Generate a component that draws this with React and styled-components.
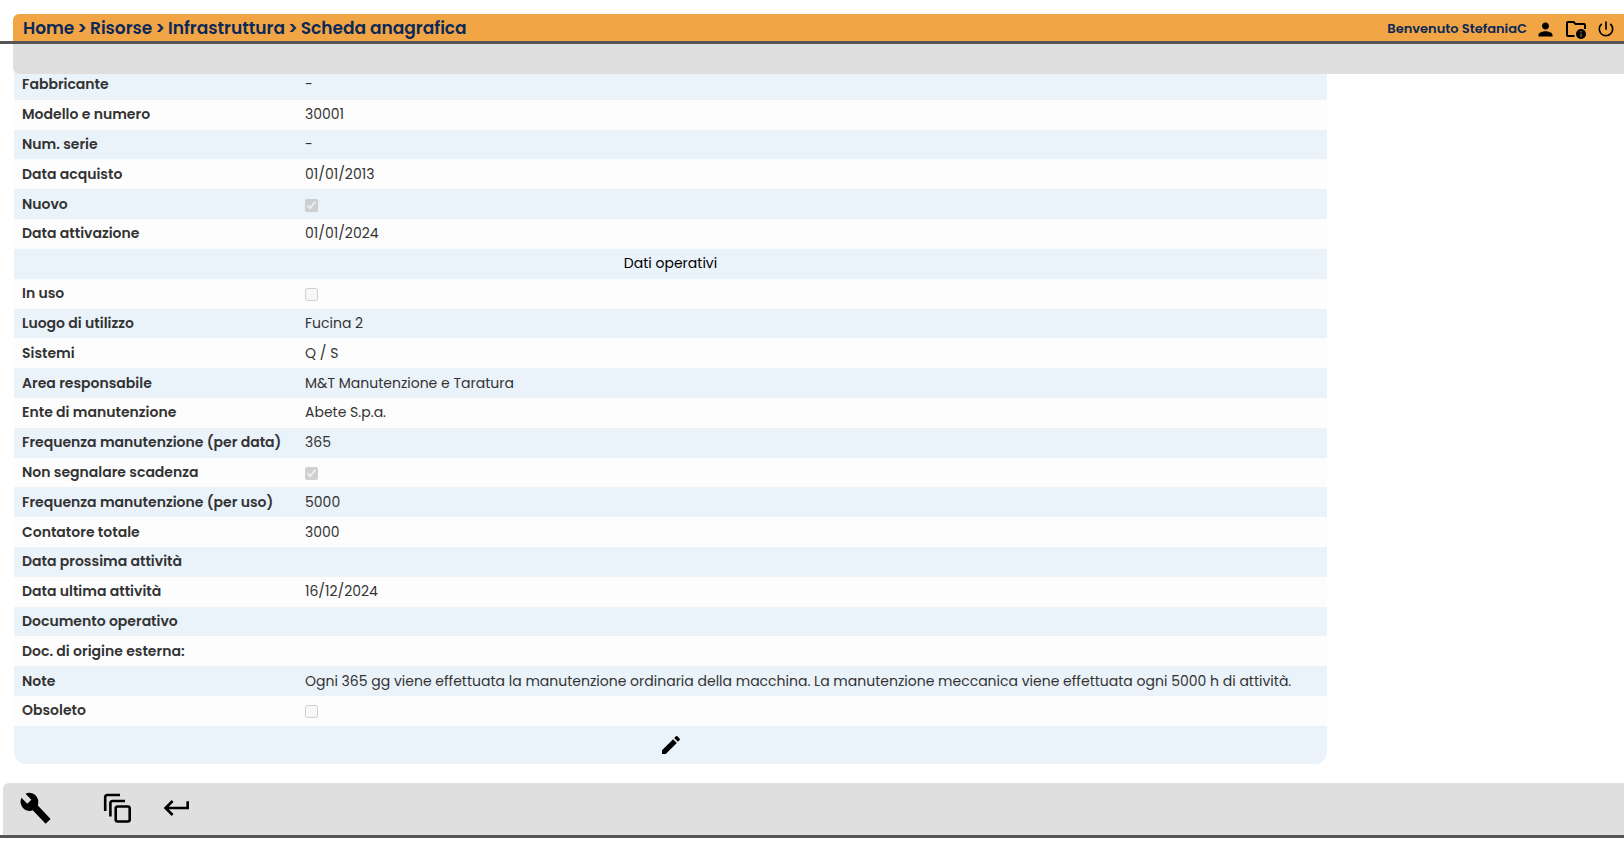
import React from "react";
import styled, { createGlobalStyle } from "styled-components";
import {
  MdEdit,
  MdKeyboardReturn,
  MdPerson,
  MdPowerSettingsNew,
} from "react-icons/md";

const GlobalStyle = createGlobalStyle`
  * {
    box-sizing: border-box;
  }
  body {
    margin: 0;
    background-color: #ffffff;
    color: #333333;
    font-family: Poppins, Inter, "Noto Sans", sans-serif;
    font-size: 14px;
  }
`;

const Page = styled.div`
  min-height: 100vh;
  padding: 14px 0 7px;
  display: flex;
  flex-direction: column;
`;

const Header = styled.header`
  position: sticky;
  top: 0;
  z-index: 1;
`;

const TitleBar = styled.div`
  height: 27px;
  margin-left: 13px;
  padding: 0 8px 0 10px;
  display: flex;
  align-items: center;
  justify-content: space-between;
  background-color: #f2a545;
  border-top-left-radius: 6px;
  color: #0a2858;
`;

const Breadcrumb = styled.nav`
  display: flex;
  gap: 3px;
  font-size: 17px;
  font-weight: 600;
  white-space: nowrap;
`;

const Crumb = styled.a`
  color: inherit;
  text-decoration: none;
`;

const UserArea = styled.div`
  display: flex;
  align-items: center;
  gap: 8px;
  padding-top: 3px;
`;

const Welcome = styled.span`
  font-size: 13px;
  font-weight: 600;
  white-space: nowrap;
`;

const IconButton = styled.button`
  display: flex;
  padding: 0;
  border: none;
  background: none;
  color: #000000;
  cursor: pointer;
`;

const Rule = styled.div`
  height: 3px;
  background-color: #555555;
`;

const SubBar = styled.div`
  height: 30px;
  margin-left: 13px;
  background-color: #dfdfdf;
  border-bottom-left-radius: 6px;
`;

const Main = styled.main`
  flex: 1;
  display: grid;
  margin-top: -4px;
  padding: 0 14px 19px;
`;

const Table = styled.table`
  width: 100%;
  max-width: 1313px;
  height: 100%;
  border-spacing: 0;
  border-radius: 0 0 12px 12px;
  overflow: hidden;
`;

const Row = styled.tr`
  height: ${(props) => (props.$tall ? "37px" : "29px")};
  background-color: #fdfdfd;
  &:nth-child(odd) {
    background-color: #eaf2fa;
  }
`;

const LabelCell = styled.th`
  width: 283px;
  padding: 0 8px;
  font-weight: 600;
  text-align: left;
  white-space: nowrap;
`;

const ValueCell = styled.td`
  padding: 0 8px;
`;

const SectionCell = styled.td`
  padding: 0;
  color: #000000;
  text-align: center;
`;

const Checkbox = styled.input`
  display: block;
  width: 13px;
  height: 13px;
  margin: 2px 0 0;
`;

const EditButton = styled(IconButton)`
  margin: 0 auto;
`;

const Footer = styled.footer`
  height: 52px;
  margin-left: 3px;
  padding: 0 16px 2px;
  display: flex;
  align-items: center;
  background-color: #dfdfdf;
  border-top-left-radius: 6px;
`;

const FooterGroup = styled.div`
  display: flex;
  align-items: center;
  gap: 30px;
  margin-left: 50px;
`;

const crumbs = ["Home", "Risorse", "Infrastruttura", "Scheda anagrafica"];

const rows = [
  { label: "Fabbricante", value: "-" },
  { label: "Modello e numero", value: "30001" },
  { label: "Num. serie", value: "-" },
  { label: "Data acquisto", value: "01/01/2013" },
  { label: "Nuovo", id: "nuovo", checked: true },
  { label: "Data attivazione", value: "01/01/2024" },
  { section: "Dati operativi" },
  { label: "In uso", id: "in-uso", checked: false },
  { label: "Luogo di utilizzo", value: "Fucina 2" },
  { label: "Sistemi", value: "Q / S" },
  { label: "Area responsabile", value: "M&T Manutenzione e Taratura" },
  { label: "Ente di manutenzione", value: "Abete S.p.a." },
  { label: "Frequenza manutenzione (per data)", value: "365" },
  { label: "Non segnalare scadenza", id: "non-segnalare", checked: true },
  { label: "Frequenza manutenzione (per uso)", value: "5000" },
  { label: "Contatore totale", value: "3000" },
  { label: "Data prossima attività", value: "" },
  { label: "Data ultima attività", value: "16/12/2024" },
  { label: "Documento operativo", value: "" },
  { label: "Doc. di origine esterna:", value: "" },
  {
    label: "Note",
    value:
      "Ogni 365 gg viene effettuata la manutenzione ordinaria della macchina. La manutenzione meccanica viene effettuata ogni 5000 h di attività.",
  },
  { label: "Obsoleto", id: "obsoleto", checked: false },
];

const FolderInfoIcon = () => (
  <svg width="24" height="24" viewBox="0 0 24 24" fill="none">
    <path
      d="M21 12V8a1 1 0 0 0-1-1h-8.500l-2-2H4a1 1 0 0 0-1 1v12a1 1 0 0 0 1 1h6.500"
      stroke="currentColor"
      strokeWidth="2"
    />
    <circle cx="17" cy="17" r="5" fill="currentColor" />
    <path d="M17 14v1.500M17 16.500v3.500" stroke="#8a6a3a" strokeWidth="1.300" />
  </svg>
);

const WrenchIcon = () => (
  <svg width="34" height="34" viewBox="0 0 24 24" fill="currentColor">
    <path d="M22.300 19.700l-9-9.500c.8-2.300.3-5.100-1.500-7-1.900-2-4.900-2.400-7.200-1.300L8.700 6.200 5.900 9 1.700 4.800C.6 7.200 1.100 10.200 3 12.100c1.800 1.900 4.500 2.400 6.700 1.500l9.100 9.500z" />
  </svg>
);

const CopiesIcon = () => (
  <svg
    width="28"
    height="30"
    viewBox="0 0 28 30"
    fill="none"
    stroke="currentColor"
    strokeWidth="2.600"
  >
    <path d="M2.200 18V4a2 2 0 0 1 2-2H17" />
    <path d="M7.400 23.500V10a2 2 0 0 1 2-2H22" />
    <rect x="12.700" y="13.500" width="14" height="15" rx="2" />
  </svg>
);

export default function App() {
  return (
    <>
      <GlobalStyle />
      <Page>
        <Header>
          <TitleBar>
            <Breadcrumb>
              {crumbs.map((crumb, i) => (
                <React.Fragment key={crumb}>
                  {i > 0 && <span>&gt;</span>}
                  <Crumb href="#">{crumb}</Crumb>
                </React.Fragment>
              ))}
            </Breadcrumb>
            <UserArea>
              <Welcome>Benvenuto StefaniaC</Welcome>
              <IconButton type="button" aria-label="Profilo">
                <MdPerson size={21} />
              </IconButton>
              <IconButton type="button" aria-label="Documenti">
                <FolderInfoIcon />
              </IconButton>
              <IconButton type="button" aria-label="Esci">
                <MdPowerSettingsNew size={20} />
              </IconButton>
            </UserArea>
          </TitleBar>
          <Rule />
          <SubBar />
        </Header>
        <Main>
          <Table>
            <tbody>
              {rows.map((row) =>
                row.section ? (
                  <Row key={row.section}>
                    <SectionCell colSpan={2}>{row.section}</SectionCell>
                  </Row>
                ) : (
                  <Row key={row.label}>
                    <LabelCell scope="row">
                      {row.id ? (
                        <label htmlFor={row.id}>{row.label}</label>
                      ) : (
                        row.label
                      )}
                    </LabelCell>
                    <ValueCell>
                      {row.id ? (
                        <Checkbox
                          type="checkbox"
                          id={row.id}
                          defaultChecked={row.checked}
                          disabled
                        />
                      ) : (
                        row.value
                      )}
                    </ValueCell>
                  </Row>
                )
              )}
              <Row $tall>
                <SectionCell colSpan={2}>
                  <EditButton type="button" aria-label="Modifica">
                    <MdEdit size={24} />
                  </EditButton>
                </SectionCell>
              </Row>
            </tbody>
          </Table>
        </Main>
        <Footer>
          <IconButton type="button" aria-label="Manutenzione">
            <WrenchIcon />
          </IconButton>
          <FooterGroup>
            <IconButton type="button" aria-label="Duplica">
              <CopiesIcon />
            </IconButton>
            <IconButton type="button" aria-label="Indietro">
              <MdKeyboardReturn size={32} />
            </IconButton>
          </FooterGroup>
        </Footer>
        <Rule />
      </Page>
    </>
  );
}
